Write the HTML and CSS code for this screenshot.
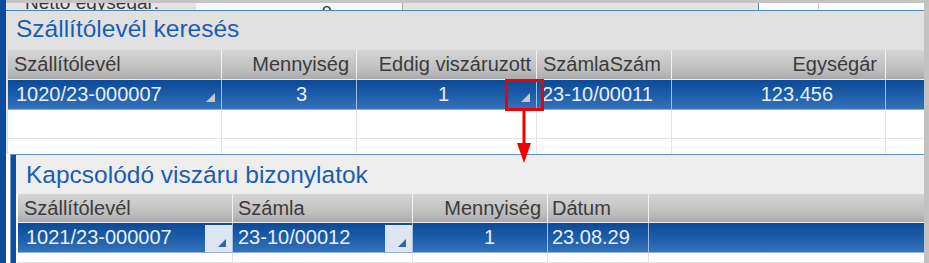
FILE: index.html
```html
<!DOCTYPE html>
<html lang="hu">
  <head>
    <meta charset="UTF-8">
    <title>Szállítólevél keresés</title>
    <link rel="stylesheet" href="styles.css">
  </head>
  <body>
    <div class="frame">
      <div class="sidebar"></div>

      <div class="content">
        <div class="topstrip"></div>

        <!-- form row behind the popup, mostly hidden -->
        <div class="formrow">
          <span class="formlabel">Nettó egységár:</span>
          <span class="forminput">0</span>
          <span class="formgap"></span>
          <span class="formcell first"></span>
          <span class="formcell"></span>
        </div>

        <section class="panel search">
          <h1 class="panel-title">Szállítólevél keresés</h1>
          <div class="grid grid-search">
            <div class="hcell">Szállítólevél</div>
            <div class="hcell right pr7">Mennyiség</div>
            <div class="hcell right pr5">Eddig viszáruzott</div>
            <div class="hcell">SzámlaSzám</div>
            <div class="hcell right pr8">Egységár</div>
            <div class="hcell last"></div>

            <div class="scell">
              <span class="val">1020/23-000007</span>
              <svg class="tri" width="9" height="9" viewBox="0 0 9 9"><path d="M9 0V9H0Z" fill="#c8c8c8"/></svg>
            </div>
            <div class="scell right pr49"><span class="val">3</span></div>
            <div class="scell">
              <span class="val right pr72">1</span>
              <svg class="tri" width="9" height="9" viewBox="0 0 9 9"><path d="M9 0V9H0Z" fill="#c8c8c8"/></svg>
            </div>
            <div class="scell pl5"><span class="val">23-10/00011</span></div>
            <div class="scell right pr52"><span class="val">123.456</span></div>
            <div class="scell last"></div>

            <div class="ecell"></div><div class="ecell"></div><div class="ecell"></div>
            <div class="ecell"></div><div class="ecell"></div><div class="ecell last"></div>

            <div class="ecell open"></div><div class="ecell open"></div><div class="ecell open"></div>
            <div class="ecell open"></div><div class="ecell open"></div><div class="ecell open last"></div>
          </div>
        </section>

        <section class="panel related">
          <div class="related-bar"></div>
          <div class="related-body">
            <h1 class="panel-title tall">Kapcsolódó viszáru bizonylatok</h1>
            <div class="grid grid-related">
              <div class="hcell">Szállítólevél</div>
              <div class="hcell pl5">Számla</div>
              <div class="hcell right pr6">Mennyiség</div>
              <div class="hcell pl4">Dátum</div>
              <div class="hcell last"></div>

              <div class="scell">
                <span class="val">1021/23-000007</span>
                <span class="pick"><svg width="8" height="8" viewBox="0 0 8 8"><path d="M8 0V8H0Z" fill="#2f66ae"/></svg></span>
              </div>
              <div class="scell pl5">
                <span class="val">23-10/00012</span>
                <span class="pick"><svg width="8" height="8" viewBox="0 0 8 8"><path d="M8 0V8H0Z" fill="#2f66ae"/></svg></span>
              </div>
              <div class="scell right pr52"><span class="val">1</span></div>
              <div class="scell pl4"><span class="val">23.08.29</span></div>
              <div class="scell last"></div>

              <div class="ecell"></div><div class="ecell"></div><div class="ecell"></div>
              <div class="ecell"></div><div class="ecell last"></div>
            </div>
          </div>
        </section>

        <!-- callout: highlighted picker and arrow to the related panel -->
        <div class="callout"></div>
        <svg class="arrow" width="14" height="52" viewBox="0 0 14 52">
          <rect x="5.5" y="0" width="3" height="34" fill="#f20000"/>
          <path d="M0 32H14L7 52Z" fill="#f20000"/>
        </svg>
      </div>

      <div class="edge"></div>
    </div>
  </body>
</html>
```

FILE: styles.css
```css
/* General styles */

* {
  box-sizing: border-box;
}

html,
body {
  margin: 0;
  padding: 0;
}

body {
  width: 929px;
  height: 263px;
  overflow: hidden;
  background: #ffffff;
  font-family: "Liberation Sans", Arial, sans-serif;
  font-size: 20px;
}

.frame {
  display: flex;
  height: 263px;
}

.sidebar {
  flex: none;
  width: 6px;
  background: #0b4c9c;
}

.edge {
  flex: none;
  width: 5px;
  background: #c2c2c2;
}

.content {
  position: relative;
  flex: 1;
  display: flex;
  flex-direction: column;
  min-width: 0;
}

.topstrip {
  height: 3px;
  background: #c4c4c4;
}

/* Form row peeking out above the popup */

.formrow {
  display: flex;
  height: 7px;
  overflow: hidden;
  background: #e3e3e3;
  color: #3a3a3a;
  font-size: 19px;
  line-height: 19px;
}

.formlabel {
  flex: none;
  width: 190px;
  padding-left: 19px;
  margin-top: -10px;
  white-space: nowrap;
}

.forminput {
  flex: none;
  width: 207px;
  padding-right: 70px;
  text-align: right;
  background: #f7f7f7;
  border-right: 1px solid #a9a9a9;
}

.formgap {
  flex: none;
  width: 355px;
}

.formcell {
  flex: 1;
  background: #ffffff;
  border-left: 1px solid #d0d0d0;
}

.formcell.first {
  flex: none;
  width: 60px;
  border-left-color: #4a85c6;
}

/* Panels */

.panel {
  border-top: 1px solid #4a85c6;
}

.search {
  background: #e1e1e1;
}

.panel-title {
  margin: 0;
  height: 39px;
  padding-left: 10px;
  font-size: 24.5px;
  font-weight: normal;
  line-height: 36px;
  color: #1b5db0;
  white-space: nowrap;
}

.panel-title.tall {
  line-height: 39px;
}

.related {
  flex: 1;
  display: flex;
  margin-left: 4px;
  border-top-color: #5b8fd0;
  background: #ffffff;
}

.related-bar {
  flex: none;
  width: 6px;
  background: #0d4e9f;
  border-left: 1px solid #6b9ad3;
}

.related-body {
  flex: 1;
  min-width: 0;
}

.related-body .panel-title {
  background: #eeeeee;
}

/* Grids */

.grid {
  display: grid;
  margin-left: 2px;
  background: #ffffff;
}

.grid-search {
  grid-template-columns: 214px 135px 180px 135px 214px 1fr;
  grid-template-rows: 30px 30px 29px 15px;
}

.grid-related {
  grid-template-columns: 215px 180px 135px 101px 1fr;
  grid-template-rows: 29px 30px 10px;
}

.hcell,
.scell,
.ecell {
  min-width: 0;
  overflow: hidden;
  white-space: nowrap;
  border-right: 1px solid #e4e4e4;
  border-bottom: 1px solid #e4e4e4;
}

.hcell {
  padding: 0 6px;
  line-height: 28px;
  color: #3c3c3c;
  background: linear-gradient(#d6d6d6, #bdbdbd 70%, #aaaaaa);
  border-right-color: #f2f2f2;
  border-bottom-color: #eeeeee;
}

.scell {
  display: flex;
  align-items: flex-start;
  padding: 0 0 0 8px;
  line-height: 29px;
  color: #e9eef5;
  background: linear-gradient(#0a4a9b, #1f5ea9 55%, #3574bb);
  border-right-color: #a6bddb;
  border-bottom-color: #8fb0da;
}

.scell .val {
  flex: 1;
}

.ecell.open {
  border-bottom: none;
}

.last {
  border-right: none;
}

.tri {
  flex: none;
  align-self: flex-end;
  margin: 0 6px 7px 0;
}

.scell .val.pr72 {
  padding-right: 72px;
}

.pick {
  flex: none;
  display: flex;
  align-items: flex-end;
  justify-content: flex-end;
  width: 27px;
  height: 27px;
  margin-top: 2px;
  padding: 0 6px 5px 0;
  background: #dde5f0;
}

/* Alignment helpers */

.right {
  text-align: right;
}

.pr5 { padding-right: 5px; }
.pr6 { padding-right: 6px; }
.pr7 { padding-right: 7px; }
.pr8 { padding-right: 8px; }
.pr49 { padding-right: 49px; }
.pr52 { padding-right: 52px; }
.pl4 { padding-left: 4px; }
.pl5 { padding-left: 5px; }

/* Callout overlay */

.callout {
  position: absolute;
  left: 499px;
  top: 79px;
  width: 39px;
  height: 32px;
  border: 3px solid #f20000;
}

.arrow {
  position: absolute;
  left: 511px;
  top: 111px;
}
```
